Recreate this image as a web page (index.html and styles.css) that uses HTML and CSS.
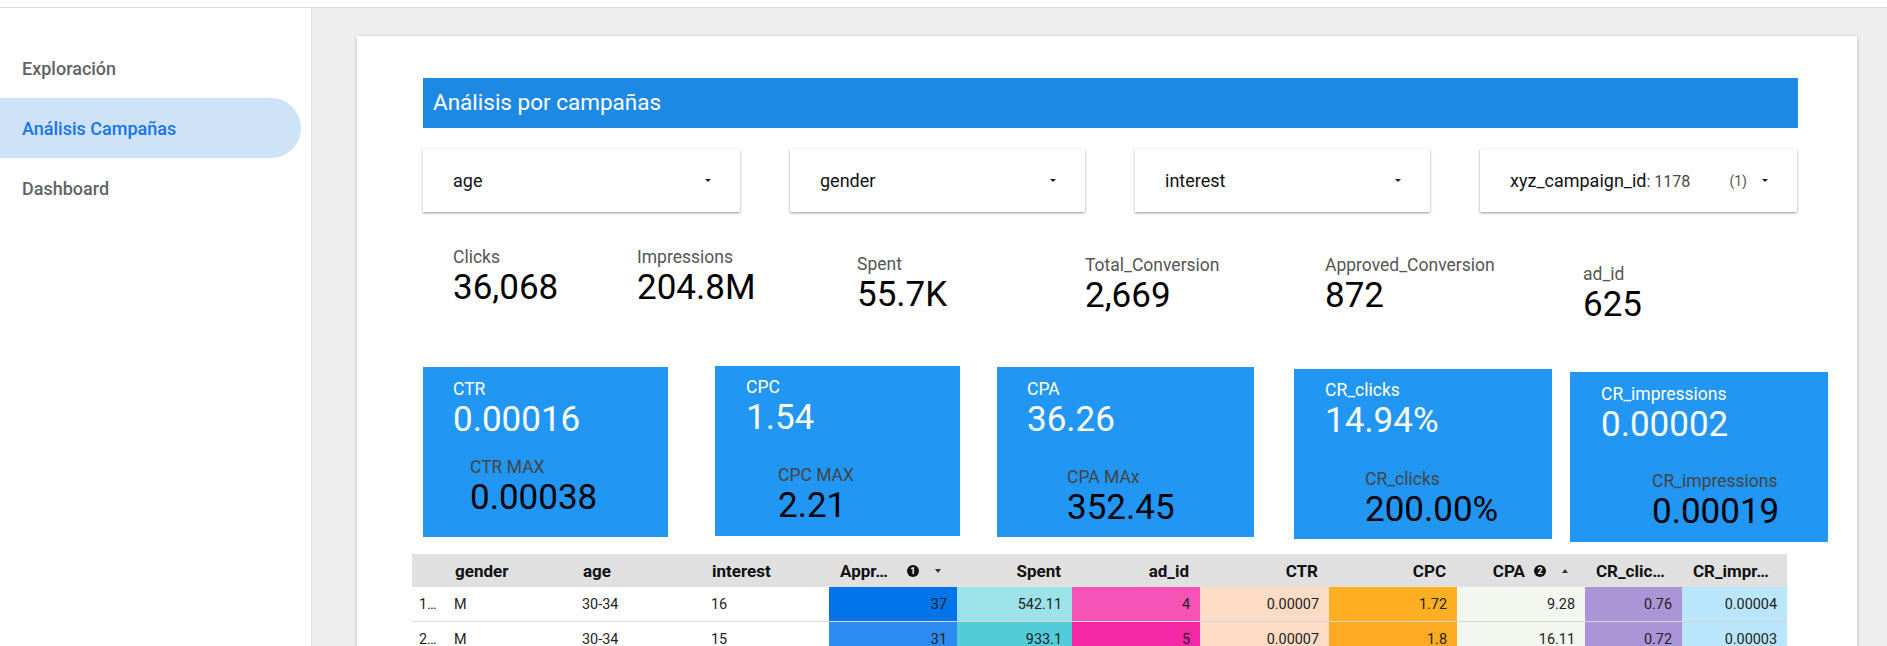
FILE: index.html
```html
<!DOCTYPE html>
<html lang="es">
<head>
<meta charset="utf-8">
<title>Análisis por campañas</title>
<link rel="stylesheet" href="styles.css">
</head>
<body>
<div class="topbar"></div>
<div class="layout">
  <nav class="sidebar">
    <div class="nav-item">Exploración</div>
    <div class="nav-item active">Análisis Campañas</div>
    <div class="nav-item">Dashboard</div>
  </nav>
  <main class="main">
    <section class="card">
      <div class="title-bar">Análisis por campañas</div>

      <div class="filters">
        <div class="filter f-wide"><span class="f-text">age</span><span class="caret"></span></div>
        <div class="filter"><span class="f-text">gender</span><span class="caret"></span></div>
        <div class="filter"><span class="f-text">interest</span><span class="caret"></span></div>
        <div class="filter f-wide"><span class="f-text">xyz_campaign_id<span class="f-sel">: 1178</span></span><span class="f-right"><span class="f-count">(1)</span><span class="caret"></span></span></div>
      </div>

      <div class="kpis">
        <div class="kpi"><div class="kpi-label">Clicks</div><div class="kpi-value">36,068</div></div>
        <div class="kpi"><div class="kpi-label">Impressions</div><div class="kpi-value">204.8M</div></div>
        <div class="kpi kpi-d7"><div class="kpi-label">Spent</div><div class="kpi-value">55.7K</div></div>
        <div class="kpi kpi-d8"><div class="kpi-label">Total_Conversion</div><div class="kpi-value">2,669</div></div>
        <div class="kpi kpi-d8"><div class="kpi-label">Approved_Conversion</div><div class="kpi-value">872</div></div>
        <div class="kpi kpi-d17"><div class="kpi-label">ad_id</div><div class="kpi-value">625</div></div>
      </div>

      <div class="tiles">
        <div class="tile t-ctr">
          <div class="t-label">CTR</div><div class="t-value">0.00016</div>
          <div class="t-sub"><div class="s-label">CTR MAX</div><div class="s-value">0.00038</div></div>
        </div>
        <div class="tile t-cpc">
          <div class="t-label">CPC</div><div class="t-value">1.54</div>
          <div class="t-sub"><div class="s-label">CPC MAX</div><div class="s-value">2.21</div></div>
        </div>
        <div class="tile t-cpa">
          <div class="t-label">CPA</div><div class="t-value">36.26</div>
          <div class="t-sub"><div class="s-label">CPA MAx</div><div class="s-value">352.45</div></div>
        </div>
        <div class="tile t-crc">
          <div class="t-label">CR_clicks</div><div class="t-value">14.94%</div>
          <div class="t-sub"><div class="s-label">CR_clicks</div><div class="s-value">200.00%</div></div>
        </div>
        <div class="tile t-cri">
          <div class="t-label">CR_impressions</div><div class="t-value">0.00002</div>
          <div class="t-sub"><div class="s-label">CR_impressions</div><div class="s-value">0.00019</div></div>
        </div>
      </div>

      <table class="grid">
        <colgroup>
          <col class="c-idx"><col class="c-128"><col class="c-129"><col class="c-128"><col class="c-128"><col class="c-115"><col class="c-128"><col class="c-129"><col class="c-128"><col class="c-128"><col class="c-97"><col class="c-105">
        </colgroup>
        <thead>
          <tr>
            <th class="l"></th>
            <th class="l">gender</th>
            <th class="l">age</th>
            <th class="l">interest</th>
            <th class="l"><div class="th-flex"><span>Appr…</span><span class="badge b-appr">1</span><span class="sort-down"></span></div></th>
            <th>Spent</th>
            <th>ad_id</th>
            <th>CTR</th>
            <th>CPC</th>
            <th class="th-cpa"><div class="th-flex th-end"><span>CPA</span><span class="badge b-cpa">2</span><span class="sort-up"></span></div></th>
            <th class="l">CR_clic…</th>
            <th class="l">CR_impr…</th>
          </tr>
        </thead>
        <tbody>
          <tr>
            <td class="l idx">1…</td><td class="l">M</td><td class="l">30-34</td><td class="l">16</td>
            <td class="bg-appr1">37</td><td class="bg-sp1">542.11</td><td class="bg-ad1">4</td><td class="bg-ctr">0.00007</td><td class="bg-cpc1">1.72</td><td class="bg-cpa">9.28</td><td class="bg-crc">0.76</td><td class="bg-cri">0.00004</td>
          </tr>
          <tr>
            <td class="l idx">2…</td><td class="l">M</td><td class="l">30-34</td><td class="l">15</td>
            <td class="bg-appr2">31</td><td class="bg-sp2">933.1</td><td class="bg-ad2">5</td><td class="bg-ctr">0.00007</td><td class="bg-cpc2">1.8</td><td class="bg-cpa">16.11</td><td class="bg-crc">0.72</td><td class="bg-cri">0.00003</td>
          </tr>
        </tbody>
      </table>
    </section>
  </main>
</div>
</body>
</html>
```

FILE: styles.css
```css
html, body {
  margin: 0;
  padding: 0;
  height: 646px;
  overflow: hidden;
}
body {
  font-family: Roboto, "Liberation Sans", Arial, sans-serif;
  background: #ffffff;
  color: #111;
}
.topbar {
  height: 7px;
  border-bottom: 1px solid #dcdcdc;
  background: #fff;
}
.layout {
  display: flex;
  height: 638px;
}
.sidebar {
  width: 312px;
  flex: 0 0 312px;
  box-sizing: border-box;
  border-right: 1px solid #e4e4e4;
  padding-top: 30px;
  background: #fff;
}
.nav-item {
  height: 60px;
  display: flex;
  align-items: center;
  padding-left: 22px;
  font-size: 18px;
  font-weight: 500;
  color: #5f6368;
  box-sizing: border-box;
}
.nav-item.active {
  width: 301px;
  background: #cee3f8;
  color: #1a73e8;
  border-radius: 0 30px 30px 0;
}
.main {
  flex: 1;
  background: #eeeeee;
  padding: 28px 0 0 45px;
  overflow: hidden;
}
.card {
  width: 1500px;
  height: 700px;
  background: #fff;
  box-shadow: 0 1px 4px rgba(0,0,0,0.22);
  box-sizing: border-box;
  padding: 42px 0 0 55px;
}
.title-bar {
  margin-left: 11px;
  width: 1375px;
  height: 50px;
  box-sizing: border-box;
  background: #1e89e4;
  color: #fff;
  font-size: 22.5px;
  line-height: 26px;
  padding: 11px 0 0 10px;
}
.filters {
  margin: 21px 0 0 11px;
  display: flex;
  gap: 50px;
}
.filter {
  width: 295px;
  height: 63px;
  box-sizing: border-box;
  background: #fff;
  box-shadow: 0 1px 2px rgba(0,0,0,0.35), 0 1px 5px rgba(0,0,0,0.08);
  display: flex;
  align-items: center;
  justify-content: space-between;
  padding: 0 29px 0 30px;
  font-size: 18px;
  color: #111;
}
.filter.f-wide {
  width: 317px;
}
.f-sel {
  font-size: 16px;
  color: #4a4a4a;
}
.f-right {
  display: flex;
  align-items: center;
  gap: 15px;
}
.f-count {
  font-size: 14px;
  color: #555;
}
.caret {
  width: 0;
  height: 0;
  border-left: 3px solid transparent;
  border-right: 3px solid transparent;
  border-top: 3px solid #222;
}
.kpis {
  margin: 35px 0 0 41px;
  display: grid;
  grid-template-columns: 184px 220px 228px 240px 258px 200px;
  align-items: start;
}
.kpi-d7 { margin-top: 7px; }
.kpi-d8 { margin-top: 8px; }
.kpi-d17 { margin-top: 17px; }
.kpi-label {
  font-size: 17.5px;
  line-height: 20px;
  color: #555;
}
.kpi-value {
  font-size: 35px;
  line-height: 42px;
  color: #000;
}
.tiles {
  margin: 40px 0 0 11px;
  display: flex;
  align-items: flex-start;
}
.tile {
  height: 170px;
  box-sizing: border-box;
  background: #2196f3;
  padding: 12px 0 0 30px;
}
.t-label {
  font-size: 17.5px;
  line-height: 20px;
  color: #fff;
}
.t-value {
  font-size: 35px;
  line-height: 42px;
  color: #fff;
}
.s-label {
  font-size: 17.5px;
  line-height: 20px;
  color: #454545;
}
.s-value {
  font-size: 35px;
  line-height: 42px;
  color: #000;
}
.t-ctr { width: 245px; margin-top: 1px; }
.t-ctr .t-sub { margin: 16px 0 0 17px; }
.t-cpc { width: 245px; margin-left: 47px; padding: 11px 0 0 31px; }
.t-cpc .t-sub { margin: 26px 0 0 32px; }
.t-cpa { width: 257px; margin-left: 37px; margin-top: 1px; }
.t-cpa .t-sub { margin: 26px 0 0 40px; }
.t-crc { width: 258px; margin-left: 40px; margin-top: 3px; padding: 11px 0 0 31px; }
.t-crc .t-sub { margin: 27px 0 0 40px; }
.t-cri { width: 258px; margin-left: 18px; margin-top: 6px; padding: 12px 0 0 31px; }
.t-cri .t-sub { margin: 25px 0 0 51px; }

.grid {
  margin-top: 12px;
  width: 1375px;
  table-layout: fixed;
  border-collapse: collapse;
}
.c-idx { width: 32px; }
.c-128 { width: 128px; }
.c-129 { width: 129px; }
.c-115 { width: 115px; }
.c-97 { width: 97px; }
.c-105 { width: 105px; }
.grid th {
  height: 33px;
  padding: 0 11px;
  background: #e0e0e0;
  font-size: 17px;
  font-weight: 700;
  color: #111;
  text-align: right;
  white-space: nowrap;
  overflow: hidden;
}
.grid th.l, .grid td.l { text-align: left; }
.grid th.th-cpa { padding-right: 17px; }
.th-flex {
  display: flex;
  align-items: center;
}
.th-end { justify-content: flex-end; }
.badge {
  width: 12px;
  height: 12px;
  border-radius: 50%;
  background: #111;
  color: #fff;
  font-size: 9px;
  font-weight: 700;
  line-height: 12px;
  text-align: center;
}
.b-appr { margin-left: 19px; }
.b-cpa { margin-left: 9px; }
.sort-down, .sort-up {
  width: 0;
  height: 0;
  border-left: 3px solid transparent;
  border-right: 3px solid transparent;
}
.sort-down { border-top: 4px solid #333; margin-left: 16px; }
.sort-up { border-bottom: 4px solid #333; margin-left: 16px; }
.grid td {
  height: 34px;
  padding: 0 10px;
  font-size: 14.4px;
  color: #222;
  text-align: right;
  white-space: nowrap;
  overflow: hidden;
  border-bottom: 1px solid #d7d7d7;
}
.grid td.idx { padding: 0 0 0 7px; }
.bg-appr1 { background: #0073ea; }
.bg-appr2 { background: #2b8bf0; }
.bg-sp1 { background: #9be3e9; }
.bg-sp2 { background: #53ccda; }
.bg-ad1 { background: #f753b6; }
.bg-ad2 { background: #f428a5; }
.bg-ctr { background: #fcdcc5; }
.bg-cpc1 { background: #ffb022; }
.bg-cpc2 { background: #ffaa22; }
.bg-cpa { background: #f4f7f0; }
.bg-crc { background: #aa96d7; }
.bg-cri { background: #b9e6fa; }
```
